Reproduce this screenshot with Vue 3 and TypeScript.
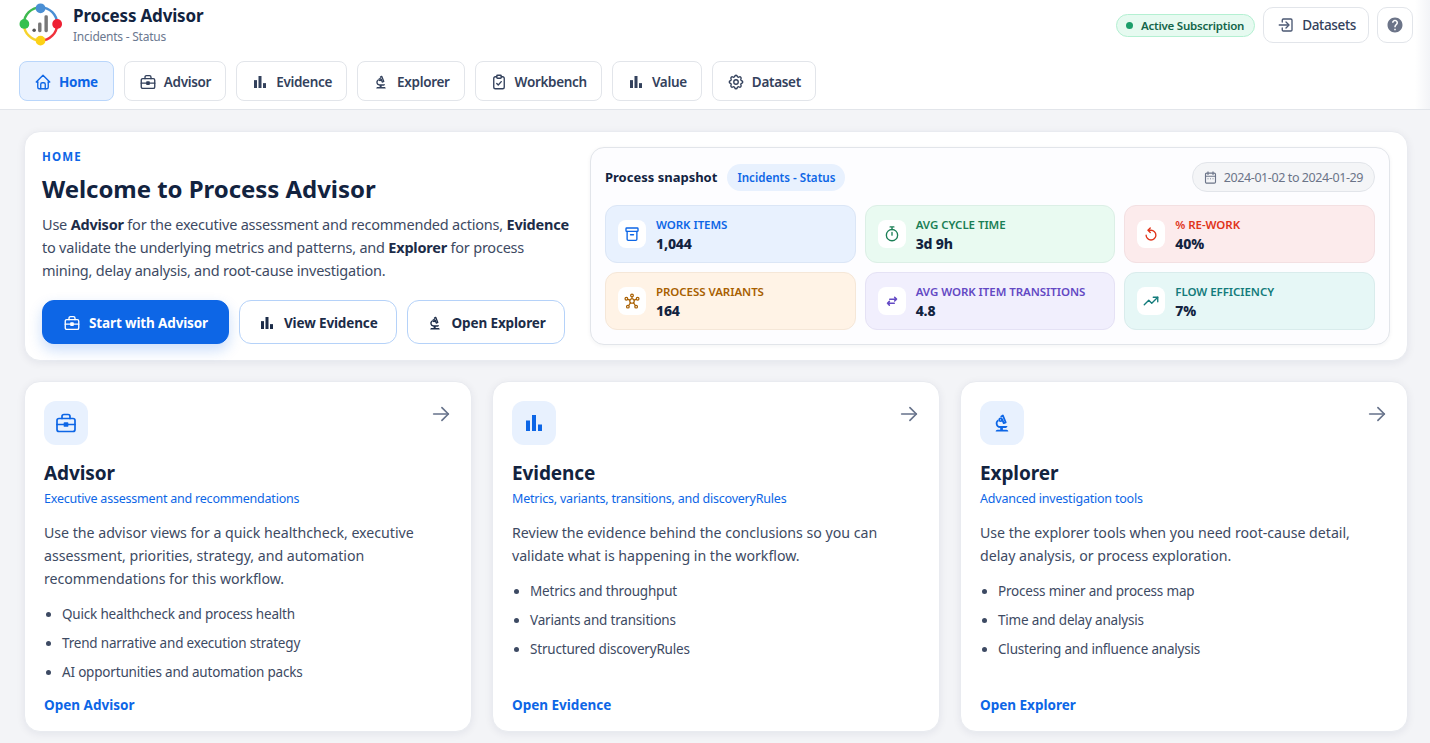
<script setup lang="ts">
const icons: Record<string, string> = {
  home: '<path d="M5 12H3l9-9 9 9h-2"/><path d="M5 12v7a2 2 0 0 0 2 2h10a2 2 0 0 0 2-2v-7"/><path d="M9 21v-6a2 2 0 0 1 2-2h2a2 2 0 0 1 2 2v6"/>',
  brief: '<rect x="3" y="7.5" width="18" height="13" rx="2"/><path d="M8 7.5V5.5a2 2 0 0 1 2-2h4a2 2 0 0 1 2 2v2"/><path d="M3 13.5h18"/><rect x="10.5" y="12" width="3" height="3" fill="currentColor"/>',
  bars: '<g fill="currentColor" stroke="none"><rect x="4" y="9.5" width="4" height="10.5"/><rect x="10" y="4" width="4" height="16"/><rect x="16" y="13.5" width="4" height="6.5"/></g>',
  scope: '<g transform="translate(1.2 1.6) scale(.9)"><path fill="currentColor" stroke="none" d="M7 19c-1.100 0-2 .9-2 2h14c0-1.100-.9-2-2-2h-4v-2h3c1.100 0 2-.9 2-2h-8c-1.660 0-3-1.340-3-3 0-1.090.59-2.040 1.460-2.560C8.170 9.030 8 8.540 8 8c0-.21.04-.42.09-.62C6.280 8.130 5 9.920 5 12c0 2.760 2.240 5 5 5v2H7z"/><path stroke-width="2" d="M11.200 4.400 13 3.200l3.100 7.600-2.200.9-1.600-3.900"/><circle cx="10.500" cy="8" r="1.600" stroke-width="1.900"/></g>',
  clip: '<path d="M9 5H7a2 2 0 0 0-2 2v12a2 2 0 0 0 2 2h10a2 2 0 0 0 2-2V7a2 2 0 0 0-2-2h-2"/><rect x="9" y="3" width="6" height="4" rx="1"/><path d="m9 14 2 2 4-4.500"/>',
  gear: '<path d="M10.325 4.317c.426-1.756 2.924-1.756 3.35 0a1.724 1.724 0 0 0 2.573 1.066c1.543-.94 3.31.826 2.37 2.37a1.724 1.724 0 0 0 1.065 2.572c1.756.426 1.756 2.924 0 3.35a1.724 1.724 0 0 0-1.066 2.573c.94 1.543-.826 3.31-2.37 2.37a1.724 1.724 0 0 0-2.572 1.065c-.426 1.756-2.924 1.756-3.35 0a1.724 1.724 0 0 0-2.573-1.066c-1.543.94-3.31-.826-2.37-2.37a1.724 1.724 0 0 0-1.065-2.572c-1.756-.426-1.756-2.924 0-3.35a1.724 1.724 0 0 0 1.066-2.573c-.94-1.543.826-3.31 2.37-2.37 1 .608 2.296.07 2.572-1.065z"/><circle cx="12" cy="12" r="3"/>',
  login: '<path d="M7 8V5.500A1.500 1.500 0 0 1 8.500 4h10A1.500 1.500 0 0 1 20 5.500v13a1.500 1.500 0 0 1-1.500 1.500h-10A1.500 1.500 0 0 1 7 18.500V16"/><path d="M3 12h12"/><path d="m12 8 4 4-4 4"/>',
  help: '<path fill="currentColor" stroke="none" d="M12 2C6.480 2 2 6.480 2 12s4.480 10 10 10 10-4.480 10-10S17.520 2 12 2zm1 17h-2v-2h2v2zm2.070-7.750-.9.920C13.450 12.900 13 13.500 13 15h-2v-.5c0-1.100.45-2.100 1.170-2.830l1.240-1.260c.37-.36.59-.86.59-1.410 0-1.100-.9-2-2-2s-2 .9-2 2H8c0-2.210 1.790-4 4-4s4 1.790 4 4c0 .88-.36 1.680-.93 2.250z"/>',
  cal: '<rect x="4" y="5" width="16" height="16" rx="2"/><path d="M8 3v4M16 3v4M4 10h16"/><path d="M8 14h.01M12 14h.01M16 14h.01"/>',
  archive: '<rect x="4" y="4" width="16" height="4.500" rx="1"/><path d="M5.500 8.500V19a1.500 1.500 0 0 0 1.500 1.500h10a1.500 1.500 0 0 0 1.500-1.500V8.500"/><path d="M10 13h4"/>',
  timer: '<circle cx="12" cy="13.500" r="7.500"/><path d="M9.500 2.500h5M12 2.500v3.500M12 13.500v-3.500"/>',
  redo: '<path d="M11 4 8 7l3 3"/><path d="M8.500 7H12a6.500 6.500 0 1 1-6.500 6.500"/>',
  hub: '<g stroke-width="1.600"><circle cx="12" cy="12" r="3"/><circle cx="12" cy="4.500" r="1.800"/><circle cx="4.500" cy="9" r="1.800"/><circle cx="19.500" cy="9" r="1.800"/><circle cx="6.500" cy="19.500" r="1.800"/><circle cx="17.500" cy="19.500" r="1.800"/><path d="M12 6.300V9M6.200 9.800l3 1M17.800 9.800l-3 1M7.600 18l2.500-3.800M16.400 18l-2.500-3.800"/></g>',
  swap: '<path d="M9 9.500h9M15.500 7l2.500 2.500-2.500 2.500M15 15H6M8.500 12.500 6 15l2.500 2.500" stroke-width="2"/>',
  trend: '<path d="m3 17 6-6 4 4 8-8"/><path d="M15 7h6v6"/>',
  arrow: '<path d="M4 12h16"/><path d="m13 5 7 7-7 7"/>',
}

const nav = [
  { label: 'Home', icon: 'home', active: true },
  { label: 'Advisor', icon: 'brief' },
  { label: 'Evidence', icon: 'bars' },
  { label: 'Explorer', icon: 'scope' },
  { label: 'Workbench', icon: 'clip' },
  { label: 'Value', icon: 'bars' },
  { label: 'Dataset', icon: 'gear' },
]

const actions = [
  { label: 'Start with Advisor', icon: 'brief', primary: true },
  { label: 'View Evidence', icon: 'bars' },
  { label: 'Open Explorer', icon: 'scope' },
]

const tiles = [
  { label: 'Work items', value: '1,044', icon: 'archive', tone: 'blue' },
  { label: 'Avg cycle time', value: '3d 9h', icon: 'timer', tone: 'green' },
  { label: '% Re-work', value: '40%', icon: 'redo', tone: 'red' },
  { label: 'Process variants', value: '164', icon: 'hub', tone: 'orange' },
  { label: 'Avg work item transitions', value: '4.8', icon: 'swap', tone: 'purple' },
  { label: 'Flow efficiency', value: '7%', icon: 'trend', tone: 'teal' },
]

const cards = [
  {
    title: 'Advisor', icon: 'brief', sub: 'Executive assessment and recommendations',
    text: 'Use the advisor views for a quick healthcheck, executive assessment, priorities, strategy, and automation recommendations for this workflow.',
    items: ['Quick healthcheck and process health', 'Trend narrative and execution strategy', 'AI opportunities and automation packs'],
    link: 'Open Advisor',
  },
  {
    title: 'Evidence', icon: 'bars', sub: 'Metrics, variants, transitions, and discoveryRules',
    text: 'Review the evidence behind the conclusions so you can validate what is happening in the workflow.',
    items: ['Metrics and throughput', 'Variants and transitions', 'Structured discoveryRules'],
    link: 'Open Evidence',
  },
  {
    title: 'Explorer', icon: 'scope', sub: 'Advanced investigation tools',
    text: 'Use the explorer tools when you need root-cause detail, delay analysis, or process exploration.',
    items: ['Process miner and process map', 'Time and delay analysis', 'Clustering and influence analysis'],
    link: 'Open Explorer',
  },
]
</script>

<template>
  <div class="page">
    <header class="header">
      <div class="top">
        <div class="brand">
          <svg class="logo" viewBox="0 0 46 46" fill="none">
            <path d="M22 7A17 17 0 0 1 39 24" stroke="#4a8fd4" stroke-width="2.500"/>
            <path d="M39 24A17 17 0 0 1 22 41" stroke="#f0323c" stroke-width="2.500"/>
            <path d="M22 41A17 17 0 0 1 5 24" stroke="#f6d32d" stroke-width="2.500"/>
            <path d="M5 24A17 17 0 0 1 22 7" stroke="#3fb950" stroke-width="2.500"/>
            <circle cx="22" cy="8" r="5" fill="#4a8fd4"/>
            <circle cx="39" cy="24" r="5" fill="#ee2033"/>
            <circle cx="22" cy="41" r="5" fill="#fcd116"/>
            <circle cx="5.500" cy="24" r="5" fill="#35c04e"/>
            <circle cx="15.500" cy="30.500" r="1.800" fill="#555"/>
            <rect x="19.500" y="22.500" width="3.500" height="10" rx="1.500" fill="#777"/>
            <rect x="26" y="15" width="3.500" height="17.500" rx="1.500" fill="#777"/>
          </svg>
          <div class="brand-text">
            <div class="brand-title">Process Advisor</div>
            <div class="brand-sub">Incidents - Status</div>
          </div>
        </div>
        <div class="top-right">
          <span class="sub-pill"><i class="dot"></i>Active Subscription</span>
          <button class="ghost"><svg class="ic" viewBox="0 0 24 24" v-html="icons.login"></svg>Datasets</button>
          <button class="ghost square"><svg class="ic help" viewBox="0 0 24 24" v-html="icons.help"></svg></button>
        </div>
      </div>
      <nav class="nav">
        <button v-for="n in nav" :key="n.label" class="nav-btn" :class="{ active: n.active }">
          <svg class="ic" viewBox="0 0 24 24" v-html="icons[n.icon]"></svg>{{ n.label }}
        </button>
      </nav>
    </header>

    <main class="main">
      <section class="hero">
        <div class="intro">
          <div class="eyebrow">HOME</div>
          <h1>Welcome to Process Advisor</h1>
          <p>Use <b>Advisor</b> for the executive assessment and recommended actions, <b>Evidence</b> to validate the underlying metrics and patterns, and <b>Explorer</b> for process mining, delay analysis, and root-cause investigation.</p>
          <div class="actions">
            <button v-for="a in actions" :key="a.label" class="action" :class="{ primary: a.primary }">
              <svg class="ic" viewBox="0 0 24 24" v-html="icons[a.icon]"></svg>{{ a.label }}
            </button>
          </div>
        </div>
        <div class="snapshot">
          <div class="snap-head">
            <strong>Process snapshot</strong>
            <span class="tag">Incidents - Status</span>
            <span class="dates"><svg class="ic" viewBox="0 0 24 24" v-html="icons.cal"></svg>2024-01-02 to 2024-01-29</span>
          </div>
          <div class="tiles">
            <div v-for="t in tiles" :key="t.label" class="tile" :class="t.tone">
              <span class="tile-icon"><svg class="ic" viewBox="0 0 24 24" v-html="icons[t.icon]"></svg></span>
              <span class="tile-text">
                <span class="tile-label">{{ t.label }}</span>
                <span class="tile-value">{{ t.value }}</span>
              </span>
            </div>
          </div>
        </div>
      </section>

      <section class="cards">
        <article v-for="c in cards" :key="c.title" class="card">
          <div class="card-top">
            <span class="card-icon"><svg viewBox="0 0 24 24" v-html="icons[c.icon]"></svg></span>
            <svg class="card-arrow" viewBox="0 0 24 24" v-html="icons.arrow"></svg>
          </div>
          <h2>{{ c.title }}</h2>
          <div class="card-sub">{{ c.sub }}</div>
          <p>{{ c.text }}</p>
          <ul>
            <li v-for="i in c.items" :key="i">{{ i }}</li>
          </ul>
          <a class="card-link">{{ c.link }}</a>
        </article>
      </section>
    </main>
  </div>
</template>

<style>
html, body { margin: 0; background: #f3f4f7; }
</style>

<style scoped>
.page {
  font-family: "Noto Sans", "Open Sans", sans-serif;
  color: #12233f;
  background: #f3f4f7;
  min-height: 743px;
  letter-spacing: -0.01em;
}
button { font-family: inherit; letter-spacing: inherit; cursor: pointer; }
.ic {
  width: 18px; height: 18px; flex: none;
  fill: none; stroke: currentColor; stroke-width: 1.800; stroke-linecap: round; stroke-linejoin: round;
}

.header {
  position: relative;
  background: #fff;
  border-bottom: 1px solid #e2e5ea;
  height: 109px;
  padding: 0 17px 0 19px;
  display: flex; flex-direction: column;
}
.header::after {
  content: ""; position: absolute; top: 0; right: 0; bottom: 0; width: 15px;
  background: linear-gradient(90deg, rgba(243,244,247,0), #f3f4f7);
}
.top { display: flex; align-items: flex-start; justify-content: space-between; height: 61px; }
.brand { display: flex; align-items: flex-start; gap: 9px; }
.logo { width: 45px; height: 46px; }
.brand-text { display: flex; flex-direction: column; }
.brand-title { font-size: 17px; font-weight: 700; line-height: 24px; margin-top: 4px; color: #12233f; letter-spacing: -0.01em; }
.brand-sub { font-size: 12px; line-height: 16px; margin-top: 1px; color: #6b7890; letter-spacing: -0.02em; }
.top-right { display: flex; align-items: center; gap: 8px; margin-top: 7px; }
.sub-pill {
  display: inline-flex; align-items: center; gap: 8px;
  height: 23px; box-sizing: border-box; padding: 0 10px 0 9px;
  background: #e6faf0; border: 1px solid #b4f0d2; border-radius: 12px;
  font-size: 11.500px; font-weight: 600; color: #14654a; letter-spacing: -0.02em;
}
.dot { width: 7px; height: 7px; border-radius: 50%; background: #1c9e6a; }
.ghost {
  display: inline-flex; align-items: center; gap: 7px;
  height: 36px; box-sizing: border-box; padding: 0 12px 0 13px;
  background: #fff; border: 1px solid #e2e5ea; border-radius: 10px;
  font-size: 13.500px; font-weight: 500; color: #33415c; letter-spacing: -0.025em;
}
.ghost.square { width: 36px; padding: 0; justify-content: center; }
.ghost .ic { color: #4b5873; }
.ghost .ic.help { color: #6c7488; }

.nav { display: flex; gap: 10px; }
.nav-btn {
  display: inline-flex; align-items: center; gap: 7px;
  height: 40px; box-sizing: border-box; padding: 1px 14px 0;
  background: #fff; border: 1px solid #e2e5ea; border-radius: 8px;
  font-size: 13.500px; font-weight: 600; color: #33415c; letter-spacing: -0.023em;
}
.nav-btn.active { padding-right: 15px; background: #e8f1fe; border-color: #b9d6fb; color: #0d66e6; font-weight: 700; }

.main { padding: 21px 22px 0 24px; display: flex; flex-direction: column; gap: 20px; }
.hero {
  display: grid; grid-template-columns: minmax(0, 1fr) 800px; gap: 18px; align-items: center;
  background: #fff; border: 1px solid #e9ebf0; border-radius: 16px;
  padding: 15px 17px;
  box-shadow: 0 2px 8px rgba(20, 35, 65, 0.07);
}
.eyebrow { font-size: 11.500px; font-weight: 700; letter-spacing: 0.1em; color: #0d66e6; line-height: 16px; }
h1 { margin: 8px 0 0; font-size: 24px; line-height: 32px; font-weight: 700; color: #12233f; letter-spacing: -0.002em; }
.intro p { margin: 8px 0 0; font-size: 14.500px; line-height: 23px; color: #3d4a63; letter-spacing: -0.015em; }
.intro b { font-weight: 700; color: #1c2c48; }
.actions { display: flex; gap: 10px; margin-top: 18px; }
.action {
  display: inline-flex; align-items: center; justify-content: center; gap: 8px;
  height: 44px; box-sizing: border-box; padding: 2px 18px 0;
  background: #fff; border: 1px solid #b5d2f9; border-radius: 12px;
  font-size: 13.500px; font-weight: 700; color: #1c2c48; letter-spacing: -0.01em;
}
.action.primary { padding: 2px 20px 0; background: #0d66e6; border-color: #0d66e6; color: #fff; box-shadow: 0 6px 14px rgba(13, 102, 230, 0.22); }

.snapshot {
  background: #fdfdff; border: 1px solid #e2e5ea; border-radius: 14px;
  padding: 14px;
  box-shadow: 0 1px 4px rgba(20, 35, 65, 0.05);
}
.snap-head { display: flex; align-items: center; gap: 10px; height: 30px; margin-bottom: 13px; }
.snap-head strong { font-size: 13px; font-weight: 700; color: #12233f; letter-spacing: 0; }
.tag {
  display: inline-flex; align-items: center; height: 27px; padding: 0 10px; border-radius: 14px;
  background: #e8f1fe; color: #0d66e6; font-size: 11.600px; font-weight: 600; letter-spacing: 0;
}
.dates {
  margin-left: auto; display: inline-flex; align-items: center; gap: 6px;
  height: 30px; box-sizing: border-box; padding: 0 11px 0 10px;
  background: #f4f5f7; border: 1px solid #e2e5ea; border-radius: 15px;
  font-size: 12.500px; color: #6b7488; letter-spacing: -0.033em;
}
.dates .ic { width: 15px; height: 15px; }
.tiles { display: grid; grid-template-columns: repeat(3, 1fr); gap: 9px; }
.tile {
  display: flex; align-items: center; gap: 10px;
  height: 58px; box-sizing: border-box; padding: 0 12px;
  border: 1px solid; border-radius: 12px;
}
.tile-icon {
  width: 28px; height: 28px; border-radius: 8px; background: #fff;
  display: flex; align-items: center; justify-content: center;
}
.tile-text { display: flex; flex-direction: column; }
.tile-label { font-size: 11.500px; font-weight: 600; text-transform: uppercase; line-height: 15px; letter-spacing: -0.005em; margin-top: 1px; }
.tile-value { font-size: 14px; font-weight: 800; line-height: 19px; margin-top: 2px; color: #12233f; }
.blue { background: #e8f1fe; border-color: #dbe6f6; }
.blue .tile-label, .blue .ic { color: #0d66e6; }
.green { background: #e9faf1; border-color: #dcefe6; }
.green .tile-label, .green .ic { color: #1b7f56; }
.red { background: #fcebec; border-color: #f3e0e2; }
.red .tile-label, .red .ic { color: #e0341a; }
.orange { background: #fff3e6; border-color: #f5e7d8; }
.orange .tile-label, .orange .ic { color: #a85f00; }
.purple { background: #f1effd; border-color: #e5e2f5; }
.purple .tile-label, .purple .ic { color: #6349c4; }
.teal { background: #e6f7f6; border-color: #d9ecec; }
.teal .tile-label, .teal .ic { color: #137b7b; }

.cards { display: grid; grid-template-columns: repeat(3, 1fr); gap: 20px; }
.card {
  display: flex; flex-direction: column;
  height: 351px; box-sizing: border-box;
  background: #fff; border: 1px solid #e9ebf0; border-radius: 16px;
  padding: 19px 19px 17px;
  box-shadow: 0 2px 8px rgba(20, 35, 65, 0.07);
}
.card-top { display: flex; justify-content: space-between; align-items: flex-start; }
.card-icon {
  width: 44px; height: 44px; border-radius: 12px; background: #e8f1fe; color: #0d66e6;
  display: flex; align-items: center; justify-content: center;
}
.card-icon svg { width: 24px; height: 24px; fill: none; stroke: currentColor; stroke-width: 1.700; stroke-linecap: round; stroke-linejoin: round; }
.card-arrow { width: 22px; height: 22px; margin-top: 2px; fill: none; stroke: #66728a; stroke-width: 1.800; stroke-linecap: round; stroke-linejoin: round; }
h2 { margin: 15px 0 0; font-size: 19px; line-height: 26px; font-weight: 700; color: #12233f; letter-spacing: -0.005em; }
.card-sub { font-size: 12.500px; line-height: 18px; margin-top: 4px; color: #0d66e6; letter-spacing: -0.017em; }
.card p { margin: 13px 0 0; font-size: 14.200px; line-height: 23px; color: #3d4a63; letter-spacing: -0.002em; }
ul { margin: 10px 0 0; padding: 0 0 0 18px; font-size: 13.500px; color: #3d4a63; letter-spacing: -0.014em; }
li { line-height: 19px; padding: 5px 0; }
li::marker { color: #3d4a63; }
.card-link { margin-top: auto; font-size: 13.500px; font-weight: 700; line-height: 18px; color: #0d66e6; letter-spacing: 0; }
</style>
